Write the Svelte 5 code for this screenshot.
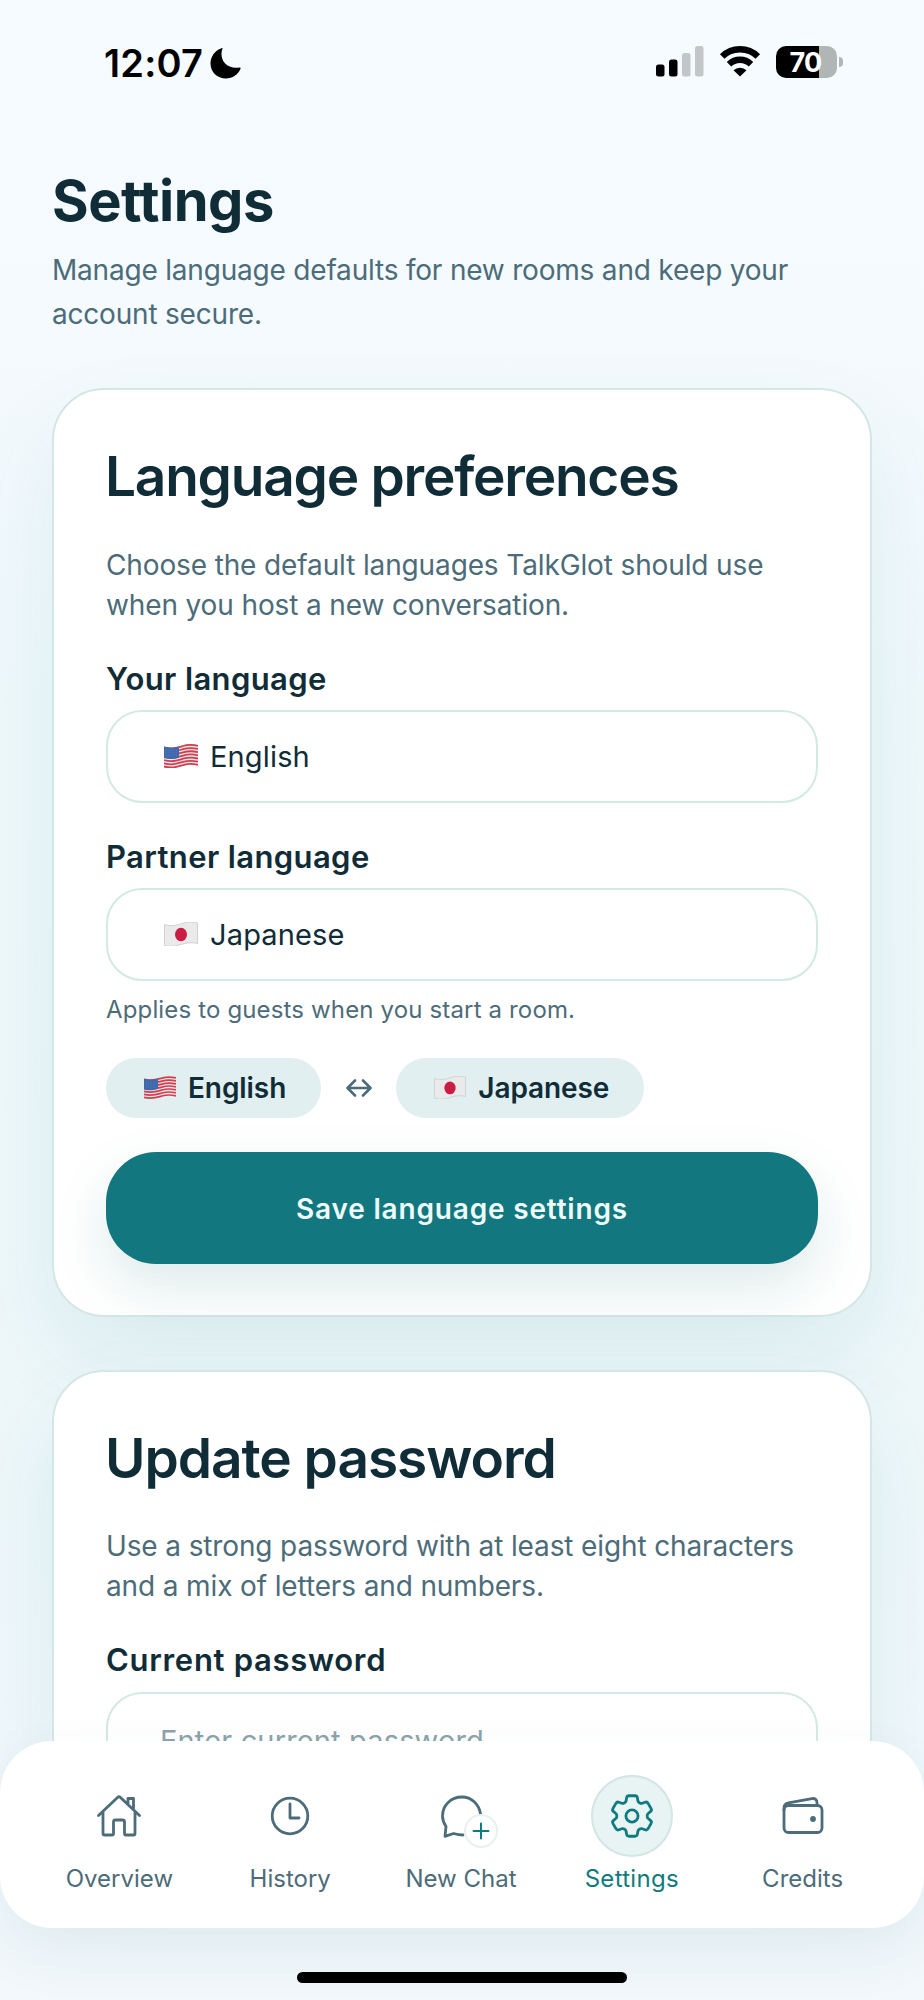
<script>
  let yourLanguage = 'English';
  let partnerLanguage = 'Japanese';
  let currentPassword = '';

  const tabs = [
    { id: 'overview', label: 'Overview' },
    { id: 'history', label: 'History' },
    { id: 'chat', label: 'New Chat' },
    { id: 'settings', label: 'Settings' },
    { id: 'credits', label: 'Credits' },
  ];
  let activeTab = 'settings';

  // Red stripes of the US flag, top to bottom
  const stripes = [0, 1, 2, 3, 4, 5, 6];
</script>

{#snippet flag(language)}
  <svg class="flag" viewBox="0 0 34 24">
    {#if language === 'English'}
      <path d="M0 2.600C8 4.800 13 3 19 1.200S29 0 34 1V21.600C29 20.300 25 20.300 19 21.900S8 25.500 0 23.400Z" fill="#f1e6e7" />
      {#each stripes as i}
        <path
          d="M0 {3.4 + i * 3.18}c8 2.200 13 .4 19-1.400s10-1.400 15-.2"
          fill="none"
          stroke="#cf4052"
          stroke-width="1.8"
        />
      {/each}
      <path d="M0 2.600C6 4.300 10.500 3.700 15 2.400V13.400C10.500 15 6 15.700 0 14Z" fill="#3f68ad" />
      <path d="M2 6.500h11M2 9h11M2 11.500h11" stroke="#6488c0" stroke-width=".7" stroke-dasharray="1 1.500" />
    {:else}
      <path d="M.5 2.600C8 4.800 13 3 19 1.200S29 0 33.500 1V21.600C29 20.300 25 20.300 19 21.900S8 25.500 .5 23.400Z" fill="#eaeaeb" stroke="#d0d1d3" />
      <ellipse cx="17" cy="12.500" rx="6" ry="6.800" fill="#cb1d43" />
    {/if}
  </svg>
{/snippet}

<div class="screen">
  <div class="status-bar">
    <div class="clock">
      <span>12:07</span>
      <svg width="31" height="31" viewBox="0 0 31 31">
        <path d="M12.500 .5C9 9.500 14.500 21.500 29.500 19.500c1-.1 1.400.5 1 1.300C28 26.800 22.500 30.500 16 30.500 7 30.500.5 24 .5 15.500.5 8.500 5 2.300 11.500.2c.8-.3 1.300-.3 1 .3z" fill="#000" />
      </svg>
    </div>
    <div class="indicators">
      <svg width="48" height="31" viewBox="0 0 48 31">
        <rect x="0" y="18.500" width="8.500" height="12" rx="2.500" fill="#000" />
        <rect x="13" y="13.500" width="8.500" height="17" rx="2.500" fill="#000" />
        <rect x="26" y="7" width="8.500" height="23.500" rx="2.500" fill="#c2c6c8" />
        <rect x="39" y="0" width="8.500" height="30.500" rx="2.500" fill="#c2c6c8" />
      </svg>
      <svg width="42" height="31" viewBox="0 0 42 31">
        <path d="M3.200 10.500a25.500 25.500 0 0 1 35.600 0M10 18.200a16 16 0 0 1 22 0" fill="none" stroke="#000" stroke-width="6.400" />
        <path d="M21 30.500l-6.500-6.300a9.500 9.500 0 0 1 13 0z" fill="#000" />
      </svg>
      <div class="battery">
        <div class="battery-body">70</div>
        <div class="battery-tip"></div>
      </div>
    </div>
  </div>

  <header>
    <h1>Settings</h1>
    <p>Manage language defaults for new rooms and keep your account secure.</p>
  </header>

  <main>
    <section class="card">
      <h2>Language preferences</h2>
      <p class="intro">Choose the default languages TalkGlot should use when you host a new conversation.</p>

      <div class="field">
        <span class="label">Your language</span>
        <button class="select">{@render flag(yourLanguage)}{yourLanguage}</button>
      </div>

      <div class="field">
        <span class="label">Partner language</span>
        <button class="select">{@render flag(partnerLanguage)}{partnerLanguage}</button>
      </div>
      <p class="hint">Applies to guests when you start a room.</p>

      <div class="pair">
        <span class="pill">{@render flag(yourLanguage)}{yourLanguage}</span>
        <svg class="swap" width="26" height="20" viewBox="0 0 26 20">
          <path d="M2 10h22M9 2.500L1.500 10 9 17.500M17 2.500L24.500 10 17 17.500" />
        </svg>
        <span class="pill">{@render flag(partnerLanguage)}{partnerLanguage}</span>
      </div>

      <button class="save">Save language settings</button>
    </section>

    <section class="card">
      <h2 class="wide">Update password</h2>
      <p class="intro">Use a strong password with at least eight characters and a mix of letters and numbers.</p>
      <div class="field">
        <label class="label" for="current">Current password</label>
        <input id="current" type="password" placeholder="Enter current password" bind:value={currentPassword} />
      </div>
    </section>
  </main>

  <nav>
    {#each tabs as tab}
      <button class="tab" class:active={activeTab === tab.id} on:click={() => (activeTab = tab.id)}>
        <span class="icon">
          {#if tab.id === 'overview'}
            <svg viewBox="0 0 48 48">
              <path d="M3.500 23.500L22.800 5.200q1.200-1 2.400 0L44.500 23.500M8 20V41.500q0 1.500 1.500 1.500h7.500q1.500 0 1.500-1.500V30q0-2 2-2h7q2 0 2 2V41.500q0 1.500 1.500 1.500h7.500q1.500 0 1.500-1.500V20M33 12V6.500h5.500v11" />
            </svg>
          {:else if tab.id === 'history'}
            <svg viewBox="0 0 48 48">
              <circle cx="24" cy="24" r="17.800" />
              <path d="M24 12V26h9" />
            </svg>
          {:else if tab.id === 'chat'}
            <svg viewBox="0 0 48 48">
              <path d="M43.500 22C42 12 34.500 5 25 5 14 5 5.500 13.300 5.500 24c0 4.500 1.500 7.500 3.500 10.500L8 44.300l8.500-2.800c3.500 1 5.500 1.500 9.500 1.500" />
            </svg>
            <span class="plus">
              <svg viewBox="0 0 30 30"><path d="M15 7.500v15M7.500 15h15" /></svg>
            </span>
          {:else if tab.id === 'settings'}
            <svg viewBox="0 0 24 24" class="gear">
              <path d="M9.594 3.940c.09-.542.56-.940 1.110-.940h2.593c.55 0 1.020.398 1.110.940l.213 1.281c.063.374.313.686.645.870.074.040.147.083.220.127.325.196.720.257 1.075.124l1.217-.456a1.125 1.125 0 0 1 1.370.490l1.296 2.247a1.125 1.125 0 0 1-.260 1.431l-1.003.827c-.293.241-.438.613-.430.992a7.723 7.723 0 0 1 0 .255c-.008.378.137.750.430.991l1.004.827c.424.350.534.955.260 1.430l-1.298 2.247a1.125 1.125 0 0 1-1.369.491l-1.217-.456c-.355-.133-.750-.072-1.076.124a6.470 6.470 0 0 1-.220.128c-.331.183-.581.495-.644.869l-.213 1.281c-.090.543-.560.940-1.110.940h-2.594c-.550 0-1.019-.398-1.110-.940l-.213-1.281c-.062-.374-.312-.686-.644-.870a6.520 6.520 0 0 1-.220-.127c-.325-.196-.720-.257-1.076-.124l-1.217.456a1.125 1.125 0 0 1-1.369-.490l-1.297-2.247a1.125 1.125 0 0 1 .260-1.431l1.004-.827c.292-.240.437-.613.430-.991a6.932 6.932 0 0 1 0-.255c.007-.380-.138-.751-.430-.992l-1.004-.827a1.125 1.125 0 0 1-.260-1.430l1.297-2.247a1.125 1.125 0 0 1 1.370-.491l1.216.456c.356.133.751.072 1.076-.124.072-.044.146-.086.220-.128.332-.183.582-.495.644-.869z" />
              <circle cx="12" cy="12" r="2.700" />
            </svg>
          {:else}
            <svg viewBox="0 0 48 48">
              <rect x="5" y="13.500" width="38" height="27" rx="4.500" />
              <path d="M5 18v-2c0-3 1.500-4.600 4.500-5.200L33 6.600c3-.5 5 1 5 4V13.500" />
              <circle cx="34" cy="27" r="1.500" fill="currentColor" />
            </svg>
          {/if}
        </span>
        <span class="tab-label">{tab.label}</span>
      </button>
    {/each}
  </nav>
  <div class="home-bar"></div>
</div>

<style>
  :global(body) {
    margin: 0;
  }

  .screen {
    --ink: #102c37;
    --muted: #4c6c79;
    --teal: #12777e;
    --line: #d3e9e4;
    position: relative;
    box-sizing: border-box;
    height: 2000px;
    overflow: hidden;
    background: linear-gradient(#f5fbff 0, #f4fafe 330px, #eef8fb 700px, #edf7fa 1500px, #f1f8fc 1900px, #f2f8fc 100%);
    color: var(--ink);
    font-family: Inter, sans-serif;
  }

  h1,
  h2,
  p {
    margin: 0;
  }

  button,
  input {
    font-family: inherit;
    color: inherit;
  }

  /* Status bar */
  .status-bar {
    display: flex;
    justify-content: space-between;
    align-items: flex-start;
    box-sizing: border-box;
    height: 171px;
    padding: 41px 81px 0 104px;
    color: #000;
  }

  .clock {
    display: flex;
    gap: 7px;
    font-size: 38px;
    font-weight: 600;
    line-height: 44px;
    letter-spacing: 0.2px;
  }

  .clock svg {
    margin-top: 7px;
  }

  .indicators {
    display: flex;
    align-items: flex-start;
    gap: 15px;
    padding-top: 5px;
  }

  .battery {
    display: flex;
    align-items: center;
    gap: 2px;
  }

  .battery-body {
    box-sizing: border-box;
    width: 61px;
    height: 32px;
    padding-right: 2px;
    border-radius: 10px;
    background: linear-gradient(90deg, #000 70%, #b0b5b6 70%);
    color: #fff;
    font-size: 27px;
    font-weight: 700;
    line-height: 33px;
    text-align: center;
    letter-spacing: -0.7px;
  }

  .battery-tip {
    width: 4px;
    height: 10px;
    border-radius: 0 5px 5px 0;
    background: #b0b5b6;
  }

  /* Page heading */
  header {
    padding: 0 52px 52px;
  }

  h1 {
    font-size: 56px;
    font-weight: 700;
    line-height: 60px;
    letter-spacing: -0.5px;
  }

  header p {
    margin-top: 17px;
    color: var(--muted);
    font-size: 28px;
    line-height: 44px;
    letter-spacing: -0.2px;
  }

  /* Cards */
  main {
    display: flex;
    flex-direction: column;
    gap: 53px;
    padding: 0 52px;
  }

  .card {
    padding: 56px 52px 51px;
    border: 2px solid #d4e7e5;
    border-radius: 52px;
    background: #fff;
    box-shadow: 0 40px 90px rgba(18, 110, 115, 0.08);
  }

  h2 {
    margin-left: -1px;
    font-size: 55px;
    font-weight: 600;
    line-height: 60px;
    letter-spacing: -1.25px;
  }

  h2.wide {
    letter-spacing: -1.05px;
  }

  .intro {
    margin-top: 38.5px;
    color: var(--muted);
    font-size: 28px;
    line-height: 40px;
    letter-spacing: -0.13px;
  }

  .field {
    display: flex;
    flex-direction: column;
    gap: 12.5px;
    margin-top: 35px;
  }

  .select + .field {
    margin-top: 36px;
  }

  .label {
    font-size: 31px;
    font-weight: 600;
    line-height: 38px;
    letter-spacing: 0.38px;
  }

  label.label {
    letter-spacing: 0.7px;
  }

  .select,
  input {
    box-sizing: border-box;
    width: 100%;
    height: 92.5px;
    padding: 0 55px;
    border: 2px solid var(--line);
    border-radius: 36px;
    background: #fff;
    font-size: 29px;
    letter-spacing: 0.15px;
    text-align: left;
  }

  .select {
    display: flex;
    align-items: center;
    gap: 12px;
    padding-left: 56px;
  }

  input {
    padding: 6px 52px 0;
    letter-spacing: 0.15px;
  }

  input::placeholder {
    color: #8ca3ad;
    opacity: 1;
  }

  .flag {
    width: 34px;
    height: 24px;
  }

  .hint {
    margin-top: 13px;
    color: var(--muted);
    font-size: 24px;
    line-height: 32px;
    letter-spacing: 0.15px;
  }

  .pair {
    display: flex;
    align-items: center;
    gap: 24.5px;
    margin-top: 32px;
  }

  .pill {
    display: flex;
    align-items: center;
    gap: 12px;
    height: 60px;
    padding: 0 35px 0 38px;
    border-radius: 30px;
    background: #e2eff0;
    font-size: 28px;
    font-weight: 600;
    letter-spacing: -0.08px;
  }

  .pill .flag {
    width: 32px;
    height: 23px;
  }

  .swap {
    fill: none;
    stroke: var(--muted);
    stroke-width: 2.6;
    stroke-linecap: round;
    stroke-linejoin: round;
  }

  .save {
    display: block;
    width: 100%;
    height: 112px;
    margin-top: 34px;
    padding: 2px 0 0;
    border: none;
    border-radius: 50px;
    background: var(--teal);
    box-shadow: 0 24px 56px rgba(18, 110, 115, 0.14);
    color: #effafa;
    font-size: 28px;
    font-weight: 600;
    letter-spacing: 0.82px;
  }

  /* Tab bar */
  nav {
    position: absolute;
    left: 0;
    right: 0;
    bottom: 72.5px;
    display: flex;
    box-sizing: border-box;
    height: 187px;
    padding: 34px 36px 0 34px;
    border-radius: 52px;
    background: #fff;
    box-shadow: 0 24px 60px rgba(20, 90, 85, 0.07);
  }

  .tab {
    display: flex;
    flex: 1;
    flex-direction: column;
    align-items: center;
    gap: 7px;
    padding: 0;
    border: none;
    background: none;
    color: var(--muted);
  }

  .icon {
    position: relative;
    display: grid;
    place-items: center;
    box-sizing: border-box;
    width: 82px;
    height: 82px;
    border: 2px solid transparent;
    border-radius: 50%;
  }

  .icon svg {
    width: 48px;
    height: 48px;
    fill: none;
    stroke: currentColor;
    stroke-width: 2.8;
    stroke-linecap: round;
    stroke-linejoin: round;
  }

  .icon svg.gear {
    width: 54px;
    height: 54px;
    stroke-width: 1.25;
  }

  .active {
    color: #0f7b7e;
  }

  .active .icon {
    border-color: #d2e6e3;
    background: #e8f3f4;
  }

  .plus {
    position: absolute;
    right: 2px;
    bottom: 7px;
    width: 34px;
    height: 34px;
    box-sizing: border-box;
    border: 2px solid #e8f1f0;
    border-radius: 50%;
    background: #fff;
    color: #0f7b7e;
  }

  .icon .plus svg {
    display: block;
    width: 30px;
    height: 30px;
    stroke-width: 2;
  }

  .tab-label {
    font-size: 24px;
    line-height: 30px;
  }

  .active .tab-label {
    letter-spacing: 0.3px;
  }

  .home-bar {
    position: absolute;
    bottom: 17px;
    left: 297px;
    width: 330px;
    height: 11px;
    border-radius: 6px;
    background: #000;
  }
</style>
